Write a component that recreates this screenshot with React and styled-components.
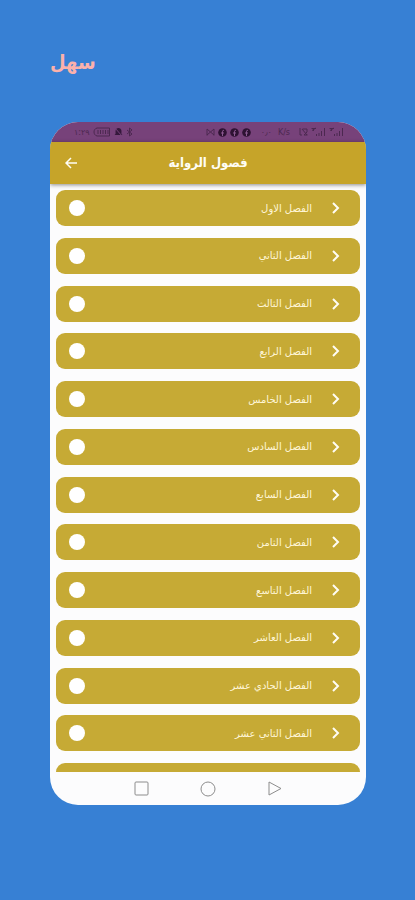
import React from 'react';
import styled, { createGlobalStyle } from 'styled-components';

const GlobalStyle = createGlobalStyle`
  * {
    box-sizing: border-box;
  }

  body {
    margin: 0;
    background: #3780d4;
    font-family: "DejaVu Sans", "Noto Sans", sans-serif;
  }
`

const Page = styled.main`
  min-height: 100vh;
  padding: 42px 49px 94px 50px;
  background: #3780d4;
`

const Brand = styled.h1`
  margin: 0 0 40px;
  height: 40px;
  line-height: 40px;
  font-family: "DejaVu Sans Condensed", "DejaVu Sans", sans-serif;
  font-size: 20px;
  font-weight: bold;
  color: #fbb1ab;
`

const Phone = styled.section`
  display: flex;
  flex-direction: column;
  border-radius: 28px;
  overflow: hidden;
  background: #fcfcfd;
`

const StatusBar = styled.div`
  display: flex;
  align-items: center;
  justify-content: space-between;
  height: 20px;
  padding: 0 22px 0 24px;
  background: #77427a;
  color: #4c2850;
  font-size: 8px;
`

const StatusGroup = styled.div`
  display: flex;
  align-items: center;
  gap: 3px;
`

const NetworkSpeed = styled.span`
  display: flex;
  gap: 6px;
  padding: 0 6px 0 7px;
`

const Header = styled.header`
  display: grid;
  grid-template-columns: 42px 1fr 42px;
  align-items: center;
  height: 42px;
  background: #c6a429;
  box-shadow: 0 1px 4px rgba(0, 0, 0, 0.45);
  z-index: 1;
`

const BackButton = styled.button`
  display: flex;
  justify-content: center;
  padding: 0;
  border: none;
  background: none;
  color: #fffdf4;
`

const Title = styled.h2`
  margin: 0;
  text-align: center;
  font-family: "DejaVu Sans Condensed", "DejaVu Sans", sans-serif;
  font-size: 13px;
  font-weight: bold;
  line-height: 20px;
  color: #fffdf4;
`

const ChapterList = styled.ul`
  display: flex;
  flex-direction: column;
  justify-content: space-between;
  height: 588px;
  margin: 0;
  padding: 6px 6px 0;
  list-style: none;
`

const Chapter = styled.button`
  display: flex;
  align-items: center;
  width: 100%;
  height: 36px;
  padding: 0 19px 0 13px;
  border: none;
  border-radius: 9px;
  background: #c6aa35;
  color: #fff6d8;
  font-family: inherit;
  font-size: 10px;
`

const NextChapterEdge = styled.li`
  height: 9px;
  border-radius: 9px 9px 0 0;
  background: #c6aa35;
`

const Dot = styled.span`
  width: 16px;
  height: 16px;
  border-radius: 50%;
  background: #ffffff;
`

const ChapterName = styled.span`
  flex: 1;
  padding-right: 19px;
  text-align: right;
`

const NavBar = styled.nav`
  display: flex;
  justify-content: center;
  gap: 51px;
  height: 33px;
`

const NavButton = styled.button`
  display: flex;
  align-items: center;
  padding: 0;
  border: none;
  background: none;
  color: #8c8c8c;
`

const chapters = [
  'الفصل الاول',
  'الفصل الثاني',
  'الفصل الثالث',
  'الفصل الرابع',
  'الفصل الخامس',
  'الفصل السادس',
  'الفصل السابع',
  'الفصل الثامن',
  'الفصل التاسع',
  'الفصل العاشر',
  'الفصل الحادي عشر',
  'الفصل الثاني عشر',
];

const BatteryIcon = () => (
  <svg width="18" height="10" viewBox="0 0 18 10" fill="none" stroke="currentColor">
    <path d="M4 1H16.5V9H4C0 8 0 2 4 1Z" />
    <path d="M5 3V7M7.5 3V7M10 3V7M12.5 3V7M15 3V7" />
  </svg>
)

const MutedIcon = () => (
  <svg width="9" height="10" viewBox="0 0 9 10">
    <path d="M0.5 8C2 7 1.5 6 1.5 4C1.5 2 3 1 4.5 1S7.5 2 7.5 4C7.5 6 7 7 8.5 8ZM3.5 9H5.5" fill="#35183c" />
    <path d="M0.5 0.5L8.5 9.5" stroke="#77427a" />
  </svg>
)

const BluetoothIcon = () => (
  <svg width="7" height="10" viewBox="0 0 7 10" fill="none" stroke="currentColor">
    <path d="M1 3L6 7L3.5 9V1L6 3L1 7" />
  </svg>
)

const MailIcon = () => (
  <svg width="9" height="8" viewBox="0 0 9 8" fill="none" stroke="currentColor">
    <path d="M1 7.5V1L4.5 4L8 1V7.5M1 7L4.5 4L8 7" />
  </svg>
)

const FacebookIcon = () => (
  <svg width="9" height="9" viewBox="0 0 9 9">
    <circle cx="4.5" cy="4.5" r="4.3" fill="#2e1233" />
    <path d="M6 2.5C4.5 2 4.5 3 4.5 4V8M3 5H6" fill="none" stroke="#8a5990" />
  </svg>
)

const WifiIcon = () => (
  <svg width="9" height="10" viewBox="0 0 9 10" fill="none" stroke="currentColor">
    <path d="M1 1V8H3M3.5 2H8V5L5 8H8.5M3 2L8 8" />
  </svg>
)

const SignalIcon = () => (
  <svg width="15" height="10" viewBox="0 0 15 10" fill="none" stroke="currentColor">
    <path d="M0.5 1.5H5M1 3.5L5 1M2.5 1V4M5.5 9V7M8 9V6M10.5 9V4M13.5 9V1" />
  </svg>
)

const App = () => (
  <>
    <GlobalStyle />
    <Page>
      <Brand lang="ar">سهل</Brand>
      <Phone>
        <StatusBar>
          <StatusGroup>
            <span>١:٢٩</span>
            <BatteryIcon />
            <MutedIcon />
            <BluetoothIcon />
          </StatusGroup>
          <StatusGroup>
            <MailIcon />
            <FacebookIcon />
            <FacebookIcon />
            <FacebookIcon />
            <NetworkSpeed>
              <span>٠٫٠</span>
              <span>K/s</span>
            </NetworkSpeed>
            <WifiIcon />
            <SignalIcon />
            <SignalIcon />
          </StatusGroup>
        </StatusBar>
        <Header>
          <BackButton aria-label="رجوع">
            <svg width="12" height="12" viewBox="0 0 12 12" fill="none" stroke="currentColor" strokeWidth="1.5">
              <path d="M12 6H1M6 1L1 6L6 11" />
            </svg>
          </BackButton>
          <Title lang="ar" dir="rtl">فصول الرواية</Title>
        </Header>
        <ChapterList>
          {chapters.map(chapter =>
            <li key={chapter}>
              <Chapter>
                <Dot />
                <ChapterName lang="ar" dir="rtl">{chapter}</ChapterName>
                <svg width="10" height="12" viewBox="0 0 10 12" fill="none" stroke="#fffdf4" strokeWidth="2">
                  <path d="M2 1L7 6L2 11" />
                </svg>
              </Chapter>
            </li>
          )}
          <NextChapterEdge aria-hidden="true" />
        </ChapterList>
        <NavBar>
          <NavButton aria-label="التطبيقات">
            <svg width="15" height="15" viewBox="0 0 15 15" fill="none" stroke="currentColor">
              <rect x="1" y="1" width="13" height="13" rx="1" />
            </svg>
          </NavButton>
          <NavButton aria-label="الرئيسية">
            <svg width="16" height="16" viewBox="0 0 16 16" fill="none" stroke="currentColor">
              <circle cx="8" cy="8" r="7" />
            </svg>
          </NavButton>
          <NavButton aria-label="السابق">
            <svg width="15" height="15" viewBox="0 0 15 15" fill="none" stroke="currentColor">
              <path d="M2 1L14 7.5L2 14Z" />
            </svg>
          </NavButton>
        </NavBar>
      </Phone>
    </Page>
  </>
)

export default App;
